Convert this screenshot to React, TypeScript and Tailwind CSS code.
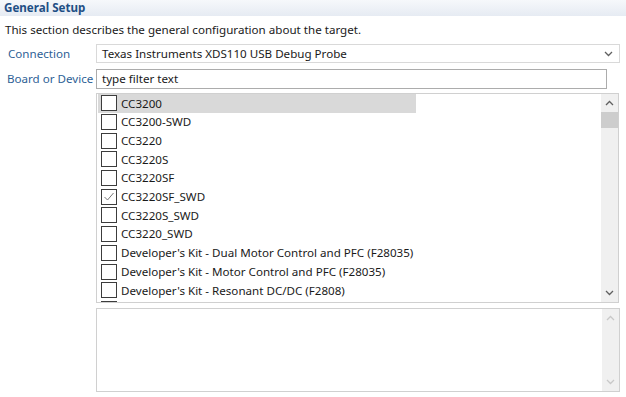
const devices: { name: string; checked?: boolean; selected?: boolean }[] = [
  { name: 'CC3200', selected: true },
  { name: 'CC3200-SWD' },
  { name: 'CC3220' },
  { name: 'CC3220S' },
  { name: 'CC3220SF' },
  { name: 'CC3220SF_SWD', checked: true },
  { name: 'CC3220S_SWD' },
  { name: 'CC3220_SWD' },
  { name: 'Developer\'s Kit - Dual Motor Control and PFC (F28035)' },
  { name: 'Developer\'s Kit - Motor Control and PFC (F28035)' },
  { name: 'Developer\'s Kit - Resonant DC/DC (F2808)' },
  { name: '' },
];

const Chevron = ({ up, light }: { up?: boolean; light?: boolean }) => (
  <svg width="9" height="6" viewBox="0 0 9 6" className={up ? 'rotate-180' : ''}>
    <path d="M1 1l3.5 3.5L8 1" fill="none" stroke={light ? '#c8c8c8' : '#606060'} strokeWidth="1.3" />
  </svg>
);

const Checkbox = ({ checked }: { checked?: boolean }) => (
  <div className="w-[16px] h-[16px] shrink-0 border border-[#3c3c3c] bg-white flex items-center justify-center">
    {checked && (
      <svg width="12" height="12" viewBox="0 0 12 12">
        <path d="M1.5 6l3 3L10.5 2" fill="none" stroke="#777777" strokeWidth="1" />
      </svg>
    )}
  </div>
);

const Scrollbar = ({ thumb, disabled }: { thumb?: boolean; disabled?: boolean }) => (
  <div className="w-[17px] shrink-0 bg-[#f0f0f0] flex flex-col items-center justify-between py-[6px]">
    <div className="flex flex-col items-center w-full">
      <Chevron up light={disabled} />
      {thumb && <div className="mt-[6px] w-[17px] h-[16px] bg-[#cdcdcd]" />}
    </div>
    <Chevron light={disabled} />
  </div>
);

export default function App() {
  return (
    <div
      className="w-[626px] h-[397px] bg-white text-[11.6px] text-[#1a1a1a] overflow-hidden"
      style={{ fontFamily: '"Segoe UI", "Noto Sans", "Open Sans", sans-serif' }}
    >
      {/* Section header */}
      <div className="h-[16px] bg-gradient-to-b from-[#f6f8fb] to-[#e6ebf3] pl-[4px] flex items-center">
        <span className="font-bold text-[#1f4f85] leading-none">General Setup</span>
      </div>
      <div className="pl-[5px] mt-[5px] h-[17px] leading-[17px]">
        This section describes the general configuration about the target.
      </div>

      <div className="mt-[6px] flex flex-col gap-[6px]">
        {/* Connection */}
        <div className="flex items-center">
          <div className="w-[96px] pl-[8px] text-[#2e5f96] whitespace-nowrap">Connection</div>
          <div className="w-[524px] h-[19px] border border-[#d9d9d9] bg-white flex items-center justify-between pl-[5px] pr-[6px]">
            <span>Texas Instruments XDS110 USB Debug Probe</span>
            <Chevron />
          </div>
        </div>

        {/* Filter */}
        <div className="flex items-center">
          <div className="w-[96px] pl-[7px] text-[#2e5f96] whitespace-nowrap">Board or Device</div>
          <div className="w-[511px] h-[20px] border border-[#acacac] bg-white flex items-center pl-[5px]">
            type filter text
          </div>
        </div>

        {/* Device list */}
        <div className="flex ml-[96px] -mt-[2px]">
          <div className="w-[523px] h-[210px] border border-[#d0d0d0] flex">
            <div className="flex-1 overflow-hidden pl-[1px]">
              {devices.map((d, i) => (
                <div key={i} className="h-[18.7px] flex items-center">
                  <div className={`flex items-center gap-[4px] h-full pl-[3px] ${d.selected ? 'bg-[#d9d9d9] w-[318px]' : ''}`}>
                    <Checkbox checked={d.checked} />
                    {d.name && <span className="whitespace-nowrap">{d.name}</span>}
                  </div>
                </div>
              ))}
            </div>
            <Scrollbar thumb />
          </div>
        </div>

        {/* Description box */}
        <div className="flex ml-[96px] -mt-[1px]">
          <div className="w-[524px] h-[84px] border border-[#d0d0d0] flex">
            <div className="flex-1" />
            <Scrollbar disabled />
          </div>
        </div>
      </div>
    </div>
  );
}
